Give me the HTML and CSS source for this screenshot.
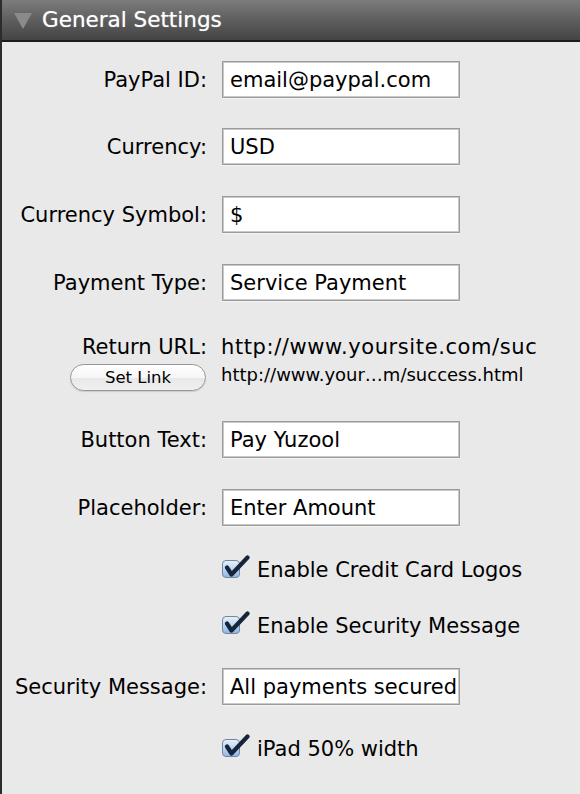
FILE: index.html
```html
<!DOCTYPE html>
<html>
<head>
<meta charset="utf-8">
<link rel="stylesheet" href="styles.css">
</head>
<body>
<div class="panel">
  <div class="header">
    <span class="tri"></span>
    <span class="title">General Settings</span>
  </div>
  <div class="form">
    <div class="row r1"><label class="lbl">PayPal ID:</label><div class="field">email@paypal.com</div></div>
    <div class="row r2"><label class="lbl">Currency:</label><div class="field">USD</div></div>
    <div class="row r3"><label class="lbl">Currency Symbol:</label><div class="field">$</div></div>
    <div class="row r3"><label class="lbl">Payment Type:</label><div class="field">Service Payment</div></div>
    <div class="row url-row"><label class="lbl">Return URL:</label><div class="url">http://www.yoursite.com/suc</div></div>
    <div class="row link-row"><div class="lbl"><button class="btn">Set Link</button></div><div class="url-small">http://www.your…m/success.html</div></div>
    <div class="row r2"><label class="lbl">Button Text:</label><div class="field">Pay Yuzool</div></div>
    <div class="row r3"><label class="lbl">Placeholder:</label><div class="field">Enter Amount</div></div>
    <div class="row chk c1"><div class="lbl"></div><div class="check">
      <svg class="cb" width="30" height="26" viewBox="0 0 30 26"><defs><linearGradient id="g1" x1="0" y1="0" x2="0" y2="1"><stop offset="0" stop-color="#e8f1fc"/><stop offset="0.5" stop-color="#bcd6f3"/><stop offset="1" stop-color="#8db7e8"/></linearGradient></defs><rect x="0.5" y="5.5" width="17" height="17" rx="3.5" fill="url(#g1)" stroke="#74869c"/><path d="M5 12.5 L9.5 19.5 L25.5 2.5" fill="none" stroke="#17253a" stroke-width="4.2" stroke-linecap="round" stroke-linejoin="round"/></svg>
      <span>Enable Credit Card Logos</span></div></div>
    <div class="row chk c2"><div class="lbl"></div><div class="check">
      <svg class="cb" width="30" height="26" viewBox="0 0 30 26"><defs><linearGradient id="g2" x1="0" y1="0" x2="0" y2="1"><stop offset="0" stop-color="#e8f1fc"/><stop offset="0.5" stop-color="#bcd6f3"/><stop offset="1" stop-color="#8db7e8"/></linearGradient></defs><rect x="0.5" y="5.5" width="17" height="17" rx="3.5" fill="url(#g2)" stroke="#74869c"/><path d="M5 12.5 L9.5 19.5 L25.5 2.5" fill="none" stroke="#17253a" stroke-width="4.2" stroke-linecap="round" stroke-linejoin="round"/></svg>
      <span>Enable Security Message</span></div></div>
    <div class="row r4"><label class="lbl">Security Message:</label><div class="field">All payments secured</div></div>
    <div class="row chk c1"><div class="lbl"></div><div class="check">
      <svg class="cb" width="30" height="26" viewBox="0 0 30 26"><defs><linearGradient id="g3" x1="0" y1="0" x2="0" y2="1"><stop offset="0" stop-color="#e8f1fc"/><stop offset="0.5" stop-color="#bcd6f3"/><stop offset="1" stop-color="#8db7e8"/></linearGradient></defs><rect x="0.5" y="5.5" width="17" height="17" rx="3.5" fill="url(#g3)" stroke="#74869c"/><path d="M5 12.5 L9.5 19.5 L25.5 2.5" fill="none" stroke="#17253a" stroke-width="4.2" stroke-linecap="round" stroke-linejoin="round"/></svg>
      <span>iPad 50% width</span></div></div>
  </div>
</div>
</body>
</html>
```

FILE: styles.css
```css
html, body {
  margin: 0;
  padding: 0;
  background: #e8e8e8;
}
body {
  font-family: "DejaVu Sans", "Liberation Sans", sans-serif;
  color: #000;
  width: 580px;
  height: 794px;
  overflow: hidden;
}
.panel {
  border-left: 2px solid #2c2c2c;
  height: 794px;
  box-sizing: border-box;
  background: #e9e9e9;
}
.header {
  height: 40px;
  background: linear-gradient(to bottom, #7c7c7c 0%, #5e5e5e 50%, #444 100%);
  border-bottom: 2px solid #1c1c1c;
  display: flex;
  align-items: center;
}
.tri {
  width: 0;
  height: 0;
  border-left: 9px solid transparent;
  border-right: 9px solid transparent;
  border-top: 16px solid #8a8a8a;
  margin-left: 12px;
  margin-top: 2px;
}
.title {
  color: #fff;
  font-size: 21.5px;
  margin-left: 10px;
  margin-top: -1px;
  text-shadow: 0 0 1px rgba(255,255,255,0.6);
}
.form {
  padding-top: 19px;
  display: flex;
  flex-direction: column;
}
.row {
  display: flex;
  align-items: center;
  column-gap: 15px;
  height: 37px;
  font-size: 21px;
}
.r2 { margin-top: 30px; }
.r3 { margin-top: 31px; }
.r4 { margin-top: 27px; }
.lbl {
  width: 205px;
  flex: none;
  text-align: right;
  white-space: nowrap;
  display: flex;
  justify-content: flex-end;
}
.field {
  box-sizing: border-box;
  background: #fff;
  border: 1px solid #9b9b9b;
  box-shadow: inset 0 0 0 1px #c9c9c9, 0 1px 0 #f4f4f4;
  padding-left: 7px;
  display: flex;
  align-items: center;
  white-space: nowrap;
  overflow: hidden;
  width: 238px;
  height: 37px;
}
.url-row {
  height: 24px;
  margin-top: 34px;
}
.url {
  margin-left: -1px;
  white-space: nowrap;
  letter-spacing: 0.6px;
}
.link-row {
  height: 27px;
  margin-top: 5px;
}
.btn {
  width: 136px;
  height: 27px;
  border-radius: 14px;
  border: 1px solid #979797;
  background: linear-gradient(to bottom, #ffffff 0%, #f6f6f6 50%, #e8e8e8 51%, #f0f0f0 100%);
  font-family: "DejaVu Sans", "Liberation Sans", sans-serif;
  font-size: 16.5px;
  color: #000;
  padding: 0;
  margin-right: 1px;
  box-shadow: 0 1px 1px rgba(0,0,0,0.12);
}
.url-small {
  font-size: 18px;
  margin-left: -1px;
  margin-top: -6px;
  white-space: nowrap;
}
.chk {
  height: 30px;
}
.c1 { margin-top: 29px; }
.c2 { margin-top: 26px; }
.check {
  display: flex;
  align-items: center;
}
.cb {
  flex: none;
  margin-right: 5px;
  margin-top: -4px;
}
```
